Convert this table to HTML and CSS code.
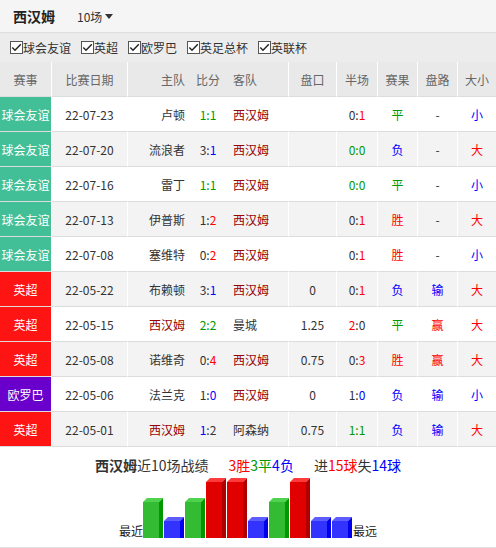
FILE: index.html
```html
<!DOCTYPE html>
<html lang="zh">
<head>
<meta charset="utf-8">
<title>西汉姆</title>
<link rel="stylesheet" href="styles.css">
</head>
<body>
<div class="page">
  <div class="topbar">
    <span class="team">西汉姆</span>
    <span class="sel">10场<i class="caret"></i></span>
  </div>
  <div class="filters">
    <label class="chk"><span class="box"><svg viewBox="0 0 13 13" width="13" height="13"><rect x="0.5" y="0.5" width="12" height="12" fill="#fff" stroke="#555"/><path d="M2.3 6.6 L5 9.3 L10.8 3.2" fill="none" stroke="#222" stroke-width="1.4"/></svg></span>球会友谊</label>
    <label class="chk"><span class="box"><svg viewBox="0 0 13 13" width="13" height="13"><rect x="0.5" y="0.5" width="12" height="12" fill="#fff" stroke="#555"/><path d="M2.3 6.6 L5 9.3 L10.8 3.2" fill="none" stroke="#222" stroke-width="1.4"/></svg></span>英超</label>
    <label class="chk"><span class="box"><svg viewBox="0 0 13 13" width="13" height="13"><rect x="0.5" y="0.5" width="12" height="12" fill="#fff" stroke="#555"/><path d="M2.3 6.6 L5 9.3 L10.8 3.2" fill="none" stroke="#222" stroke-width="1.4"/></svg></span>欧罗巴</label>
    <label class="chk"><span class="box"><svg viewBox="0 0 13 13" width="13" height="13"><rect x="0.5" y="0.5" width="12" height="12" fill="#fff" stroke="#555"/><path d="M2.3 6.6 L5 9.3 L10.8 3.2" fill="none" stroke="#222" stroke-width="1.4"/></svg></span>英足总杯</label>
    <label class="chk"><span class="box"><svg viewBox="0 0 13 13" width="13" height="13"><rect x="0.5" y="0.5" width="12" height="12" fill="#fff" stroke="#555"/><path d="M2.3 6.6 L5 9.3 L10.8 3.2" fill="none" stroke="#222" stroke-width="1.4"/></svg></span>英联杯</label>
  </div>
  <table class="games">
    <colgroup>
      <col class="c-lg"><col class="c-date"><col class="c-home"><col class="c-score"><col class="c-away"><col class="c-hcp"><col class="c-half"><col class="c-res"><col class="c-pl"><col class="c-ou">
    </colgroup>
    <thead>
      <tr>
        <th class="sep">赛事</th><th class="sep">比赛日期</th><th class="home">主队</th><th>比分</th><th class="away sep">客队</th><th class="sep">盘口</th><th class="sep">半场</th><th class="sep">赛果</th><th class="sep">盘路</th><th>大小</th>
      </tr>
    </thead>
    <tbody>
      <tr>
        <td class="lg friendly">球会友谊</td><td class="sep">22-07-23</td><td class="home">卢顿</td><td class="g">1:1</td><td class="away sep wh">西汉姆</td><td class="sep"></td><td class="sep">0:<span class="r">1</span></td><td class="sep g">平</td><td class="sep">-</td><td class="b">小</td>
      </tr>
      <tr>
        <td class="lg friendly">球会友谊</td><td class="sep">22-07-20</td><td class="home">流浪者</td><td>3:<span class="b">1</span></td><td class="away sep wh">西汉姆</td><td class="sep"></td><td class="sep g">0:0</td><td class="sep b">负</td><td class="sep">-</td><td class="r">大</td>
      </tr>
      <tr>
        <td class="lg friendly">球会友谊</td><td class="sep">22-07-16</td><td class="home">雷丁</td><td class="g">1:1</td><td class="away sep wh">西汉姆</td><td class="sep"></td><td class="sep g">0:0</td><td class="sep g">平</td><td class="sep">-</td><td class="b">小</td>
      </tr>
      <tr>
        <td class="lg friendly">球会友谊</td><td class="sep">22-07-13</td><td class="home">伊普斯</td><td>1:<span class="r">2</span></td><td class="away sep wh">西汉姆</td><td class="sep"></td><td class="sep">0:<span class="r">1</span></td><td class="sep r">胜</td><td class="sep">-</td><td class="r">大</td>
      </tr>
      <tr>
        <td class="lg friendly">球会友谊</td><td class="sep">22-07-08</td><td class="home">塞维特</td><td>0:<span class="r">2</span></td><td class="away sep wh">西汉姆</td><td class="sep"></td><td class="sep">0:<span class="r">1</span></td><td class="sep r">胜</td><td class="sep">-</td><td class="b">小</td>
      </tr>
      <tr>
        <td class="lg epl">英超</td><td class="sep">22-05-22</td><td class="home">布赖顿</td><td>3:<span class="b">1</span></td><td class="away sep wh">西汉姆</td><td class="sep">0</td><td class="sep">0:<span class="r">1</span></td><td class="sep b">负</td><td class="sep b">输</td><td class="r">大</td>
      </tr>
      <tr>
        <td class="lg epl">英超</td><td class="sep">22-05-15</td><td class="home wh">西汉姆</td><td class="g">2:2</td><td class="away sep">曼城</td><td class="sep">1.25</td><td class="sep"><span class="r">2</span>:0</td><td class="sep g">平</td><td class="sep r">赢</td><td class="r">大</td>
      </tr>
      <tr>
        <td class="lg epl">英超</td><td class="sep">22-05-08</td><td class="home">诺维奇</td><td>0:<span class="r">4</span></td><td class="away sep wh">西汉姆</td><td class="sep">0.75</td><td class="sep">0:<span class="r">3</span></td><td class="sep r">胜</td><td class="sep r">赢</td><td class="r">大</td>
      </tr>
      <tr>
        <td class="lg uel">欧罗巴</td><td class="sep">22-05-06</td><td class="home">法兰克</td><td>1:<span class="b">0</span></td><td class="away sep wh">西汉姆</td><td class="sep">0</td><td class="sep">1:<span class="b">0</span></td><td class="sep b">负</td><td class="sep b">输</td><td class="b">小</td>
      </tr>
      <tr>
        <td class="lg epl">英超</td><td class="sep">22-05-01</td><td class="home wh">西汉姆</td><td><span class="b">1</span>:2</td><td class="away sep">阿森纳</td><td class="sep">0.75</td><td class="sep g">1:1</td><td class="sep b">负</td><td class="sep b">输</td><td class="r">大</td>
      </tr>
    </tbody>
  </table>
  <div class="summary">
    <div class="title">
      <span class="strong">西汉姆</span>近10场战绩
      <span class="group"><span class="r">3胜</span><span class="g">3平</span><span class="b">4负</span></span>
      <span class="group">进<span class="r">15球</span>失<span class="b">14球</span></span>
    </div>
    <div class="chart">
      <span class="edge">最近</span>
      <svg class="bars" width="210" height="62" viewBox="0 0 210 62">
        <g transform="translate(0,0)"><rect x="0" y="26" width="16" height="36" fill="#33bb33"/><polygon points="0,26 4,22 20,22 16,26" fill="#4fd34f"/><polygon points="16,26 20,22 20,62 16,62" fill="#009900"/></g>
        <g transform="translate(21,0)"><rect x="0" y="45" width="16" height="17" fill="#3333ff"/><polygon points="0,45 4,41 20,41 16,45" fill="#5c5cff"/><polygon points="16,45 20,41 20,62 16,62" fill="#0000ee"/></g>
        <g transform="translate(42,0)"><rect x="0" y="26" width="16" height="36" fill="#33bb33"/><polygon points="0,26 4,22 20,22 16,26" fill="#4fd34f"/><polygon points="16,26 20,22 20,62 16,62" fill="#009900"/></g>
        <g transform="translate(63,0)"><rect x="0" y="6" width="16" height="56" fill="#e00000"/><polygon points="0,6 4,2 20,2 16,6" fill="#ff3a3a"/><polygon points="16,6 20,2 20,62 16,62" fill="#b00000"/></g>
        <g transform="translate(84,0)"><rect x="0" y="6" width="16" height="56" fill="#e00000"/><polygon points="0,6 4,2 20,2 16,6" fill="#ff3a3a"/><polygon points="16,6 20,2 20,62 16,62" fill="#b00000"/></g>
        <g transform="translate(105,0)"><rect x="0" y="45" width="16" height="17" fill="#3333ff"/><polygon points="0,45 4,41 20,41 16,45" fill="#5c5cff"/><polygon points="16,45 20,41 20,62 16,62" fill="#0000ee"/></g>
        <g transform="translate(126,0)"><rect x="0" y="26" width="16" height="36" fill="#33bb33"/><polygon points="0,26 4,22 20,22 16,26" fill="#4fd34f"/><polygon points="16,26 20,22 20,62 16,62" fill="#009900"/></g>
        <g transform="translate(147,0)"><rect x="0" y="6" width="16" height="56" fill="#e00000"/><polygon points="0,6 4,2 20,2 16,6" fill="#ff3a3a"/><polygon points="16,6 20,2 20,62 16,62" fill="#b00000"/></g>
        <g transform="translate(168,0)"><rect x="0" y="45" width="16" height="17" fill="#3333ff"/><polygon points="0,45 4,41 20,41 16,45" fill="#5c5cff"/><polygon points="16,45 20,41 20,62 16,62" fill="#0000ee"/></g>
        <g transform="translate(189,0)"><rect x="0" y="45" width="16" height="17" fill="#3333ff"/><polygon points="0,45 4,41 20,41 16,45" fill="#5c5cff"/><polygon points="16,45 20,41 20,62 16,62" fill="#0000ee"/></g>
      </svg>
      <span class="edge">最远</span>
    </div>
  </div>
</div>
</body>
</html>
```

FILE: styles.css
```css
* { box-sizing: border-box; }
html, body { margin: 0; padding: 0; background: #fff; }
body {
  font-family: "Noto Sans CJK SC", "Open Sans", sans-serif;
  font-size: 12px;
  color: #333;
}
.page { width: 496px; }

.topbar {
  height: 33px;
  background: #f5f5f5;
  border-bottom: 1px solid #dedede;
  display: flex;
  align-items: center;
  padding-left: 13px;
  gap: 22px;
}
.team { font-size: 14px; font-weight: bold; color: #222; }
.sel { font-size: 12px; color: #333; display: flex; align-items: center; }
.caret {
  display: inline-block;
  width: 0; height: 0;
  margin-left: 3px;
  border-left: 4px solid transparent;
  border-right: 4px solid transparent;
  border-top: 5px solid #333;
}

.filters {
  height: 29px;
  background: #ececec;
  display: flex;
  align-items: center;
  padding-left: 10px;
  gap: 10px;
}
.chk { display: flex; align-items: center; color: #333; }
.box { display: flex; width: 13px; height: 13px; }

.games {
  width: 496px;
  table-layout: fixed;
  border-collapse: separate;
  border-spacing: 0;
}
.c-lg { width: 52px; }
.c-date { width: 76px; }
.c-home { width: 62px; }
.c-score { width: 36px; }
.c-away { width: 63px; }
.c-hcp { width: 48px; }
.c-half { width: 41px; }
.c-res { width: 40px; }
.c-pl { width: 40px; }
.c-ou { width: 38px; }

.games th, .games td {
  height: 35px;
  padding: 0;
  text-align: center;
  white-space: nowrap;
  border-bottom: 1px solid #dcdcdc;
  font-weight: normal;
}
.games th {
  background: #e9e9e9;
  color: #666;
}
.games tbody tr:nth-child(even) td { background: #f3f3f3; }
.games .sep { border-right: 1px solid #fff; }
.games .home { text-align: right; padding-right: 5px; }
.games .away { text-align: left; padding-left: 7px; }

.games td.lg { color: #fff; border-right: 1px solid #fff; }
.games tbody tr td.friendly { background: #43bf97; }
.games tbody tr td.epl { background: #ff1414; }
.games tbody tr td.uel { background: #6a00cc; }

.wh { color: #990000; }
.r { color: #ff0000; }
.g { color: #009900; }
.b { color: #0000ff; }

.summary {
  height: 101px;
  border-bottom: 1px solid #e0e0e0;
  display: flex;
  flex-direction: column;
  align-items: center;
  padding-top: 9px;
}
.title {
  font-size: 14px;
  line-height: 18px;
  color: #333;
  display: flex;
  gap: 0;
}
.title .strong { font-weight: bold; }
.title .group { margin-left: 20px; }
.chart {
  display: flex;
  align-items: flex-end;
  margin-top: 2px;
}
.edge { font-size: 12px; line-height: 14px; color: #222; }
.bars { display: block; }
```
